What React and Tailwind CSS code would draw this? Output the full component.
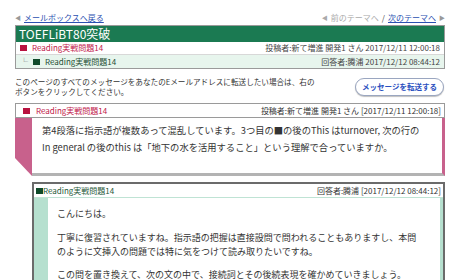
import React from 'react';

const font = { fontFamily: '"Noto Sans CJK JP", "Liberation Sans", sans-serif' };

// thread header table
const ThreadBox = () => (
  <div className="border border-[#9a9a9a]">
    <div className="h-[16px] bg-[#1b7a52] text-white text-[12px] leading-[16px] px-[3px]">TOEFLiBT80突破</div>
    <div className="h-[13px] flex items-center justify-between px-[4px] text-[8px] bg-white border-b border-[#d8d8d8]">
      <div className="flex items-center gap-[5px] text-[#c0174a]">
        <span className="w-[7px] h-[6px] bg-[#b8123f]" />
        <span>Reading実戦問題14</span>
      </div>
      <span className="text-[#444]">投稿者:新て増進 開発1 さん 2017/12/11 12:00:18</span>
    </div>
    <div className="h-[13px] flex items-center justify-between px-[4px] text-[8px] bg-[#e7f5ed]">
      <div className="flex items-center gap-[5px] text-[#1f4f34]">
        <span className="text-[#777]">└</span>
        <span className="w-[7px] h-[6px] bg-[#0f4a2a]" />
        <span>Reading実戦問題14</span>
      </div>
      <span className="text-[#444]">回答者:腾浦 2017/12/12 08:44:12</span>
    </div>
  </div>
);

const PostMessage = () => (
  <div>
    <div className="h-[15px] flex items-center justify-between border border-[#9a9a9a] pl-[7px] pr-[3px] text-[8px] bg-white">
      <div className="flex items-center gap-[6px] text-[#c0174a]">
        <span className="w-[7px] h-[6px] bg-[#b8123f]" />
        <span>Reading実戦問題14</span>
      </div>
      <span className="text-[#333]">投稿者:新て増進 開発1 さん [2017/12/11 12:00:18]</span>
    </div>
    <div className="flex">
      <div className="w-[17px] bg-[#c8618c] [clip-path:polygon(0_0,100%_0,100%_100%,0_calc(100%-18px))]" />
      <div className="flex-1 border-r-[3px] border-r-[#c8618c] border-b-[3px] border-b-[#b3b3b3] pl-[10px] pr-[8px] pt-[4px] pb-[17px] text-[9.3px] text-[#333]">
        <div className="h-[17px] flex items-center whitespace-nowrap">第4段落に指示語が複数あって混乱しています。3つ目の■の後のThis はturnover, 次の行の</div>
        <div className="h-[17px] flex items-center whitespace-nowrap">In general の後のthis は「地下の水を活用すること」という理解で合っていますか。</div>
      </div>
    </div>
  </div>
);

const ReplyMessage = () => (
  <div className="ml-[17px] border-2 border-[#6b6b6b]">
    <div className="h-[14px] flex items-center justify-between pl-[2px] pr-[2px] text-[8px] bg-white border-b border-[#bfe3d4]">
      <div className="flex items-center text-[#1f5a3a]">
        <span className="w-[7px] h-[6px] bg-[#0f4a2a]" />
        <span>Reading実戦問題14</span>
      </div>
      <span className="text-[#333]">回答者:腾浦 [2017/12/12 08:44:12]</span>
    </div>
    <div className="flex">
      <div className="w-[14px] bg-[#b6e0cf]" />
      <div className="flex-1 border-r-[3px] border-r-[#b6e0cf] pl-[9px] pr-[6px] pt-[9px] pb-[20px] text-[9px] text-[#333]">
        <div className="h-[14px] flex items-center whitespace-nowrap">こんにちは。</div>
        <div className="h-[10px]" />
        <div className="h-[14px] flex items-center whitespace-nowrap">丁寧に復習されていますね。指示語の把握は直接設問で問われることもありますし、本問</div>
        <div className="h-[14px] flex items-center whitespace-nowrap">のように文挿入の問題では特に気をつけて読み取りたいですね。</div>
        <div className="h-[9px]" />
        <div className="h-[14px] flex items-center whitespace-nowrap overflow-hidden">この問を置き換えて、次の文の中で、接続詞とその後続表現を確かめていきましょう。</div>
      </div>
    </div>
  </div>
);

export default function App() {
  return (
    <div className="w-[460px] h-[280px] overflow-hidden bg-white" style={font}>
      <div className="px-[15px]">
        <div className="h-[25px] pt-[9px] flex justify-between text-[8px] leading-[11px]">
          <div className="flex items-center gap-[3px]">
            <span className="text-[#999] text-[6px]">◀</span>
            <span className="text-[#2a4fb0] underline">メールボックスへ戻る</span>
          </div>
          <div className="flex items-center gap-[3px]">
            <span className="text-[#aaa] text-[6px]">◀</span>
            <span className="text-[#aaa]">前のテーマへ</span>
            <span className="text-[#444]">/</span>
            <span className="text-[#2a4fb0] underline">次のテーマへ</span>
            <span className="text-[#999] text-[6px]">▶</span>
          </div>
        </div>
        <ThreadBox />
        <div className="flex items-center justify-between mt-[8px] mb-[6px]">
          <div className="text-[7.6px] text-[#333]">
            <div className="h-[10px] leading-[10px] whitespace-nowrap">このページのすべてのメッセージをあなたのEメールアドレスに転送したい場合は、右の</div>
            <div className="h-[10px] leading-[10px] whitespace-nowrap">ボタンをクリックしてください。</div>
          </div>
          <button className="w-[89px] h-[18px] mr-[1px] rounded-full border border-[#9aa6c0] bg-white shadow-[0_1px_1px_rgba(0,0,0,0.25)] text-[7.5px] font-bold text-[#2a4fc0]">
            メッセージを転送する
          </button>
        </div>
        <PostMessage />
        <div className="h-[6px]" />
        <ReplyMessage />
      </div>
    </div>
  );
}
